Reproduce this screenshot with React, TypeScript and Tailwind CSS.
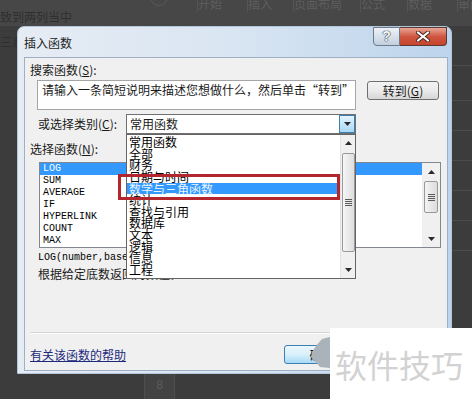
const mono = "font-['Liberation_Mono',monospace]"

const Tri = ({ up = false }: { up?: boolean }) => (
  <svg width="7" height="4" viewBox="0 0 7 4" className="block">
    <path d={up ? 'M0 4 L3.5 0 L7 4 Z' : 'M0 0 L7 0 L3.5 4 Z'} fill="#2a2a2a" />
  </svg>
)

function Grip() {
  return (
    <div className="flex flex-col gap-[1px]">
      <div className="w-[7px] h-px bg-[#5a5a5a]" />
      <div className="w-[7px] h-px bg-[#5a5a5a]" />
      <div className="w-[7px] h-px bg-[#5a5a5a]" />
      <div className="w-[7px] h-px bg-[#5a5a5a]" />
    </div>
  )
}

function Backdrop() {
  return (
    <div className="absolute inset-0">
      {/* ribbon strip */}
      <div className="h-[26px] bg-[#474747] relative overflow-hidden text-[12px] text-[#2f2f2f]">
        <span className="absolute left-0 top-[9px] leading-[16px] whitespace-nowrap">致到两列当中</span>
        <div className="absolute left-[150px] top-[-12px] w-[18px] h-[18px] rounded-full border border-[#5a5a5a]" />
        <div className="absolute left-[180px] top-[-4px] flex text-[#5e5e5e] leading-[16px] whitespace-nowrap">
          <span className="w-[17px]" />
          <span className="w-[50px] border-l border-[#555]">开始</span>
          <span className="w-[46px] border-l border-[#555]">插入</span>
          <span className="w-[67px] border-l border-[#555]">页面布局</span>
          <span className="w-[47px] border-l border-[#555]">公式</span>
          <span className="w-[50px] border-l border-[#555]">数据</span>
          <span className="w-[40px] border-l border-[#555]">审阅</span>
        </div>
      </div>
      <div className="absolute left-0 top-[34px] text-[12px] leading-[16px] text-[#2f2f2f]">三系</div>
      {/* right grid */}
      <div className="absolute right-0 top-[26px] w-[22px] h-[348px] flex flex-col">
        <div className="h-[40px] border-b border-[#4c4c4c]" />
        <div className="h-[35px] border-b border-[#4c4c4c]" />
        <div className="h-[30px] border-b border-[#4c4c4c]" />
        <div className="h-[30px] border-b border-[#4c4c4c]" />
        <div className="h-[30px] border-b border-[#4c4c4c]" />
        <div className="h-[30px] border-b border-[#4c4c4c]" />
        <div className="h-[30px] border-b border-[#4c4c4c]" />
      </div>
      {/* bottom cell */}
      <div className="absolute left-[144px] top-[374px] w-[31px] h-[25px] bg-[#434343] border-x border-[#4e4e4e] flex justify-center pt-[2px] text-[12px] text-[#5c5c5c] font-['Liberation_Sans',sans-serif]">
        8
      </div>
    </div>
  )
}

function FunctionList() {
  const items = ['LOG', 'SUM', 'AVERAGE', 'IF', 'HYPERLINK', 'COUNT', 'MAX']
  return (
    <div className="ml-[9px] w-[402px] h-[86px] border border-[#828790] bg-white flex">
      <div className={`flex-1 ${mono} text-[10px] leading-[12px] text-black`}>
        {items.map((it, i) => (
          <div key={it} className={`h-[12px] pl-[3px] ${i === 0 ? 'bg-[#3399ff] text-white' : ''}`}>
            {it}
          </div>
        ))}
      </div>
      <div className="w-[18px] bg-[#f0f0f0] flex flex-col items-center">
        <div className="h-[17px] flex items-center justify-center"><Tri up /></div>
        <div className="mt-[1px] w-[14px] h-[32px] rounded-[2px] border border-[#9a9a9a] bg-linear-to-r from-[#f4f4f4] to-[#dcdcdc] flex items-center justify-center">
          <Grip />
        </div>
        <div className="flex-1" />
        <div className="h-[17px] flex items-center justify-center"><Tri /></div>
      </div>
    </div>
  )
}

function CategoryDropdown() {
  const items = ['常用函数', '全部', '财务', '日期与时间', '数学与三角函数', '统计', '查找与引用', '数据库', '文本', '逻辑', '信息', '工程']
  return (
    <div className="absolute left-[101px] top-[76px] w-[230px] h-[145px] border border-[#646464] bg-white flex z-10">
      <div className="flex-1 pt-[1px] text-[12px] leading-[11.64px] text-black overflow-hidden">
        {items.map((it, i) => (
          <div key={it} className={`h-[11.64px] pl-[2px] whitespace-nowrap ${i === 4 ? 'bg-[#3399ff] text-[#eaf4ff]' : ''}`}>
            {it}
          </div>
        ))}
      </div>
      <div className="w-[15px] bg-[#f0f0f0] border-l border-[#e2e2e2] flex flex-col items-center">
        <div className="h-[16px] flex items-center justify-center"><Tri up /></div>
        <div className="mt-[2px] w-[13px] h-[99px] rounded-[2px] border border-[#9a9a9a] bg-linear-to-r from-[#f6f6f6] to-[#dedede] flex items-center justify-center">
          <Grip />
        </div>
        <div className="flex-1" />
        <div className="h-[16px] flex items-center justify-center"><Tri /></div>
      </div>
    </div>
  )
}

function Dialog() {
  return (
    <div className="absolute left-[17px] top-[26px] w-[435px] h-[348px] rounded-t-[7px] border border-[#b4c6da] bg-linear-to-r from-[#e6ecf4] via-[#d9e5f2] to-[#bcd4ec] flex flex-col">
      {/* title bar */}
      <div className="h-[30px] flex items-start shrink-0">
        <span className="pl-[6px] pt-[8px] text-[12px] leading-[16px] text-[#1e1e1e]">插入函数</span>
        <div className="ml-auto mr-[4px] flex">
          <div className="w-[27px] h-[19px] rounded-bl-[4px] border border-[#6d7b8c] bg-linear-to-b from-[#eef2f7] to-[#c3cfdd] flex items-center justify-center font-['Liberation_Sans',sans-serif] font-bold text-[14px] text-[#f6f8fa] [text-shadow:0_0_1px_#2b3a4a,0_0_1px_#2b3a4a,0_0_1px_#2b3a4a]">
            ?
          </div>
          <div className="w-[47px] h-[19px] rounded-br-[4px] border border-l-0 border-[#5a3a34] bg-linear-to-b from-[#e8a596] via-[#cf5640] to-[#c6442d] flex items-center justify-center">
            <svg width="14" height="11" viewBox="0 0 14 11">
              <path d="M2 1.5 L12 9.5 M12 1.5 L2 9.5" stroke="#4a2620" strokeWidth="4" strokeLinecap="round" />
              <path d="M2 1.5 L12 9.5 M12 1.5 L2 9.5" stroke="#ffffff" strokeWidth="2.2" strokeLinecap="round" />
            </svg>
          </div>
        </div>
      </div>

      {/* panel */}
      <div className="relative ml-[6px] w-[424px] h-[314px] border border-[#9fb0c4] bg-[#f0f0f0] px-[5px] text-[12px] text-[#1a1a1a]">
        <div className="pt-[4px] leading-[16px]">搜索函数(<span className="underline">S</span>):</div>

        <div className="mt-[2px] flex items-start">
          <div className="ml-[7px] w-[319px] h-[30px] border border-[#a5a5a5] bg-white pl-[4px] pt-[1px] leading-[16px] whitespace-nowrap overflow-hidden">
            请输入一条简短说明来描述您想做什么，然后单击“转到”
          </div>
          <div className="ml-[11px] mt-[1px] w-[72px] h-[19px] rounded-[3px] border border-[#707070] bg-linear-to-b from-[#f3f3f3] via-[#ebebeb] to-[#d6d6d6] flex items-center justify-center leading-[16px]">
            转到(<span className="underline">G</span>)
          </div>
        </div>

        <div className="mt-[4px] flex items-center h-[20px]">
          <span className="ml-[8px] w-[88px] shrink-0 leading-[16px]">或选择类别(<span className="underline">C</span>):</span>
          <div className="w-[230px] h-[20px] border border-[#707070] bg-white flex items-center">
            <span className="pl-[3px] leading-[16px]">常用函数</span>
            <div className="ml-auto w-[16px] h-[18px] border border-[#3c7fb1] bg-linear-to-b from-[#e3f3fd] to-[#a9d8f5] flex items-center justify-center">
              <Tri />
            </div>
          </div>
        </div>

        <div className="mt-[7px] leading-[16px]">选择函数(<span className="underline">N</span>):</div>

        <div className="mt-[5px]">
          <FunctionList />
        </div>

        <div className={`mt-[4px] ml-[8px] ${mono} text-[10px] leading-[12px] text-black`}>LOG(number,base)</div>
        <div className="mt-[2px] ml-[8px] leading-[16px]">根据给定底数返回对数值。</div>

        <div className="mt-[50px] mr-[2px] border-t border-[#d5d5d5] border-b border-b-white" />

        <div className="mt-[11px] flex items-center h-[19px]">
          <span className="underline text-[#1c2a7c] leading-[16px]">有关该函数的帮助</span>
          <div className="ml-auto w-[75px] h-[19px] rounded-[3px] border border-[#3c7fb1] bg-linear-to-b from-[#eaf6fd] via-[#d9f0fc] to-[#a7d9f5] flex items-center justify-center leading-[16px] text-black">
            确定
          </div>
          <div className="ml-[5px] mr-[3px] w-[75px] h-[19px] rounded-[3px] border border-[#707070] bg-linear-to-b from-[#f3f3f3] to-[#d6d6d6] flex items-center justify-center leading-[16px]">
            取消
          </div>
        </div>

        <CategoryDropdown />

        {/* annotation */}
        <div className="absolute left-[93px] top-[116px] w-[222px] h-[26px] border-[3px] border-[#b3262d] z-20" />
      </div>
    </div>
  )
}

function Watermark() {
  return (
    <>
      <svg className="absolute left-[310px] top-[337px]" width="20" height="31" viewBox="0 0 20 31">
        <path d="M20 0 L12 2 Q6 8 2 15 L1 20 L10 30 L20 31 Z" fill="#a9b3b9" />
      </svg>
      <div className="absolute left-[330px] top-[328px] right-0 bottom-0 bg-white flex items-center pl-[5px]">
        <span className="text-[32px] leading-[40px] text-[#d2d2d2] whitespace-nowrap">软件技巧</span>
      </div>
    </>
  )
}

export default function App() {
  return (
    <div className="relative w-[472px] h-[399px] overflow-hidden bg-[#3c3c3c] font-['Noto_Sans_CJK_SC',sans-serif]">
      <Backdrop />
      <Dialog />
      <Watermark />
    </div>
  )
}
